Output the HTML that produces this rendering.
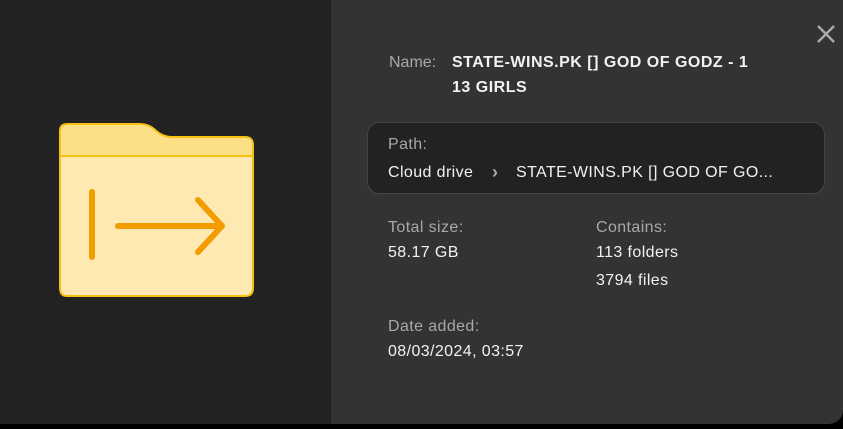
<!DOCTYPE html>
<html><head><meta charset="utf-8"><style>
body{margin:0;width:843px;height:429px;background:#000;overflow:hidden;font-family:"Liberation Sans",sans-serif;}
.l{position:absolute;left:0;top:0;width:331px;height:424px;background:#222;}
.r{position:absolute;left:331px;top:0;width:512px;height:424px;background:#333;border-bottom-right-radius:14px;}
.t{position:absolute;font-size:16px;white-space:nowrap;line-height:20px;letter-spacing:0.4px;}
.g{color:#a8a8a8;}
.w{color:#f2f2f2;}
.b{font-weight:bold;color:#f2f2f2;letter-spacing:0.5px;}
.box{position:absolute;left:367px;top:122px;width:456px;height:70px;background:#222;border:1px solid #444;border-radius:12px;}
</style></head><body>
<div class="l"></div>
<div class="r"></div>
<svg style="position:absolute;left:0;top:0" width="331" height="424">
<path d="M60 131 Q60 124 67 124 L140 124 Q148 124 154 129 Q162 137 172 137 L245 137 Q253 137 253 145 L253 288 Q253 296 245 296 L67 296 Q60 296 60 288 Z" fill="#fee9b2" stroke="#f5c010" stroke-width="2"/>
<path d="M61 131 Q61 125 67 125 L140 125 Q148 125 154 130 Q162 138 172 138 L245 138 Q252 138 252 145 L252 156 L61 156 Z" fill="#fddf88"/>
<line x1="60" y1="156" x2="253" y2="156" stroke="#f5c010" stroke-width="2"/>
<g stroke="#f29c00" stroke-width="6" stroke-linecap="round" fill="none" stroke-linejoin="round">
<line x1="92" y1="192" x2="92" y2="257"/>
<line x1="118" y1="226" x2="221" y2="226"/>
<path d="M198 200 L222 226 L198 252"/>
</g>
</svg>
<svg style="position:absolute;left:815px;top:23px" width="22" height="22"><path d="M3 3L19 19M19 3L3 19" stroke="#aaa" stroke-width="2.4"/></svg>
<div class="t g" style="left:389px;top:53px;letter-spacing:0">Name:</div>
<div class="t b" style="left:452px;top:53px">STATE-WINS.PK [] GOD OF GODZ - 1</div>
<div class="t b" style="left:452px;top:78px">13 GIRLS</div>
<div class="box"></div>
<div class="t g" style="left:388px;top:135px">Path:</div>
<div class="t w" style="left:388px;top:163px">Cloud drive</div>
<div class="t g" style="left:492px;top:162px;font-size:18px;font-weight:bold">&#8250;</div>
<div class="t w" style="left:516px;top:163px">STATE-WINS.PK [] GOD OF GO...</div>
<div class="t g" style="left:388px;top:218px">Total size:</div>
<div class="t w" style="left:388px;top:243px">58.17 GB</div>
<div class="t g" style="left:596px;top:218px">Contains:</div>
<div class="t w" style="left:596px;top:243px">113 folders</div>
<div class="t w" style="left:596px;top:271px">3794 files</div>
<div class="t g" style="left:388px;top:317px">Date added:</div>
<div class="t w" style="left:388px;top:342px">08/03/2024, 03:57</div>
</body></html>
